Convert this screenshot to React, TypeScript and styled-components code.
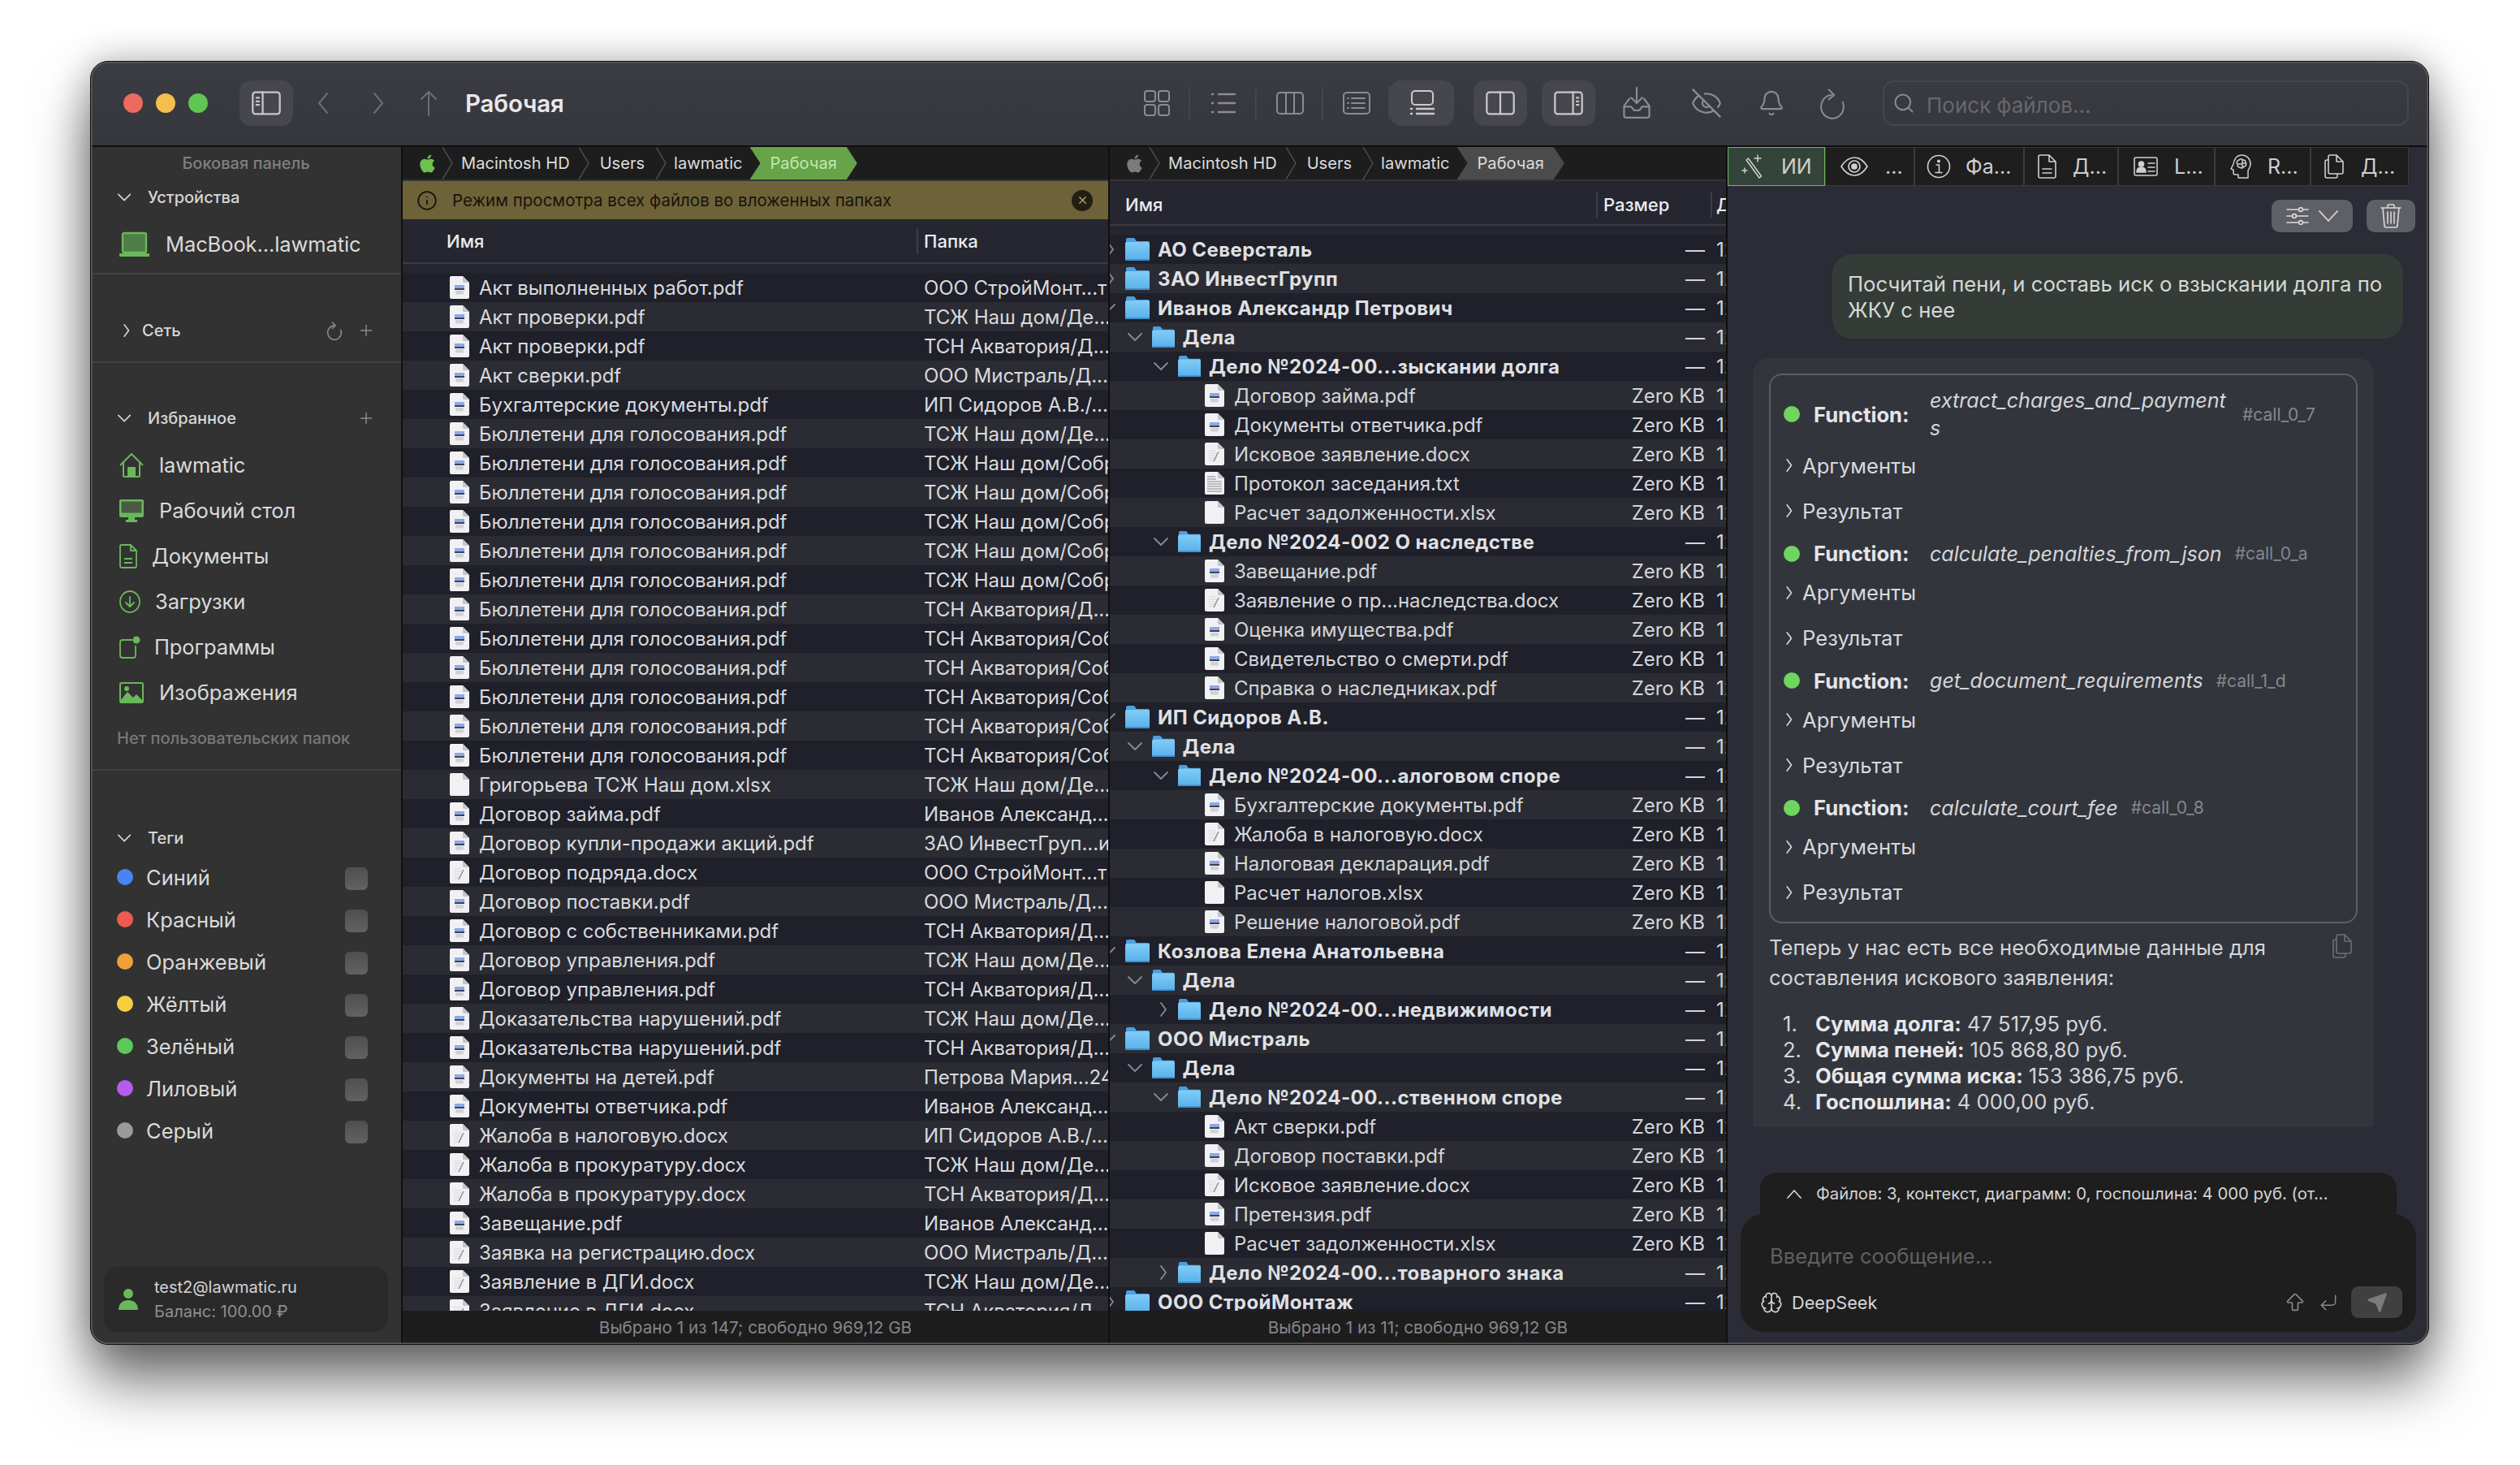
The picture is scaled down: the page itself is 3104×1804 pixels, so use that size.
import React from "react";
import styled, { createGlobalStyle } from "styled-components";
import { FaApple } from "react-icons/fa";
import { Bell, Brain, EyeOff, Info, Search, X, Plus, Send, CornerDownLeft, ArrowBigUp } from "lucide-react";

const Global = createGlobalStyle`
  html, body { margin: 0; padding: 0; background: #fff; }
  * { box-sizing: border-box; }
  body { font-family: Inter, "Noto Sans", "Liberation Sans", sans-serif; -webkit-font-smoothing: antialiased; }
`;

const Stage = styled.div`
  width: 3104px; height: 1804px; padding: 75px 0 0 111px; overflow: hidden; background: #fff;
`;
const Win = styled.div`
  position: relative; width: 2881px; height: 1581px; border: 1px solid #0c0c0c; border-radius: 22px;
  overflow: hidden; display: flex; flex-direction: column; background: #2b2c36;
  box-shadow: 0 46px 70px rgba(0,0,0,.55), 0 0 46px rgba(0,0,0,.28);
  &::after { content: ""; position: absolute; inset: 0; border-radius: 21px; pointer-events: none; box-shadow: inset 0 0 0 1.5px #5c5d61; }
`;
const TitleBar = styled.div`
  flex: 0 0 105px; display: flex; align-items: center; padding: 0 24px 1px 40px;
  background: linear-gradient(#3b3c41, #36373d); border-bottom: 2px solid #0e0e0e;
`;
const Light = styled.span<{ $c: string }>`
  width: 24px; height: 24px; border-radius: 50%; background: ${p => p.$c}; margin-right: 16px; flex: none;
`;
const IconBtn = styled.div<{ $w?: number; $on?: boolean; $gap?: number; $c?: string }>`
  flex: none; width: ${p => p.$w ?? 66}px; height: 56px; display: flex; align-items: center; justify-content: center;
  border-radius: 14px; margin-left: ${p => p.$gap ?? 0}px; color: ${p => p.$c ?? (p.$on ? "#c9c9cd" : "#8b8c91")};
  background: ${p => (p.$on ? "#46474d" : "transparent")};
`;
const Title = styled.div`
  margin-left: 15px; font-size: 29.5px; font-weight: 600; color: #e8e8ea; letter-spacing: -.2px;
`;
const Tools = styled.div`
  margin-left: auto; display: flex; align-items: center;
`;
const Seg = styled.div`
  width: 82px; height: 56px; display: flex; align-items: center; justify-content: center; color: #8b8c91; position: relative;
  &:not(:last-child)::after { content: ""; position: absolute; right: 0; top: 8px; bottom: 8px; width: 2px; background: #45464c; }
`;
const SearchBox = styled.div`
  margin-left: 29px; width: 648px; height: 56px; border: 2px solid #46474d; border-radius: 14px; display: flex; align-items: center;
  padding-left: 10px; color: #8b8c91; font-size: 26px;
  span { margin: 4px 0 0 14px; color: #66686e; }
`;

const Body = styled.div`flex: 1; min-height: 0; display: flex;`;

const Sidebar = styled.div`
  flex: 0 0 384px; background: #323232; border-right: 2px solid #0f0f0f; display: flex; flex-direction: column; color: #dcdcdc;
`;
const SideTitle = styled.div`
  height: 40px; display: flex; align-items: center; justify-content: center; font-size: 20px; color: #7f7f7f; font-weight: 500;
`;
const SectionHead = styled.div<{ $top?: number; $left?: number }>`
  height: 44px; margin-top: ${p => p.$top ?? 0}px; display: flex; align-items: center; padding: 0 32px 0 33px; font-size: 20px; font-weight: 500; color: #d6d6d6;
  b { font-weight: 500; margin-left: ${p => p.$left ?? 19}px; flex: 1; }
  svg { flex: none; }
`;
const SideAction = styled.span`
  display: flex; color: #8a8a8a; margin-left: 16px;
`;
const SideItem = styled.div<{ $top?: number; $gap?: number }>`
  height: 56px; margin-top: ${p => p.$top ?? 0}px; padding: 0 0 1px 35px; display: flex; align-items: center; gap: ${p => p.$gap ?? 19}px; font-size: 25.5px; color: #dadada; letter-spacing: -.1px;
  svg { flex: none; }
`;
const Hint = styled.div`
  height: 40px; margin-top: 8px; padding-left: 32px; display: flex; align-items: center; font-size: 20px; font-weight: 500; color: #787878;
`;
const Rule = styled.div<{ $top: number }>`
  height: 2px; margin-top: ${p => p.$top}px; background: #424242; flex: none;
`;
const TagRow = styled.div`
  height: 52px; flex: none; display: flex; align-items: center; padding: 0 41px 0 32px; font-size: 25.5px; color: #dadada;
  b { font-weight: 400; flex: 1; margin-left: 16px; }
`;
const TagDot = styled.span<{ $c: string }>`
  width: 20px; height: 20px; border-radius: 50%; background: ${p => p.$c}; flex: none;
`;
const TagBox = styled.span`
  width: 28px; height: 28px; margin-top: 4px; border-radius: 6px; background: linear-gradient(#4f4f4f, #626262); flex: none;
`;
const UserCard = styled.div`
  margin: auto 16px 15px; height: 80px; border-radius: 16px; background: #2a2a2a; display: flex; align-items: center; padding-left: 18px; gap: 20px;
`;
const UserText = styled.div`
  display: flex; flex-direction: column; gap: 9px; font-size: 20px; color: #d4d4d4; line-height: 21px;
  small { font-size: 20px; color: #8f8f8f; }
`;

const Panel = styled.div<{ $w: number }>`
  flex: 0 0 ${p => p.$w}px; min-width: 0; display: flex; flex-direction: column; border-right: 2px solid #0f0f0f; background: #252630; overflow: hidden;
`;
const Crumbs = styled.div`
  flex: 0 0 42px; display: flex; align-items: stretch; background: #1d1d1d; border-bottom: 2px solid #333437; font-size: 20.1px; color: #dcdcdc;
`;
const AppleCell = styled.div<{ $c: string }>`
  width: 48px; padding-left: 18px; display: flex; align-items: center; color: ${p => p.$c};
`;
const Crumb = styled.div<{ $pad: number }>`
  display: flex; align-items: center; padding: 0 ${p => p.$pad}px; white-space: nowrap;
`;
const CrumbActive = styled.div<{ $bg: string; $c: string }>`
  display: flex; align-items: center; padding: 0 25px; background: ${p => p.$bg}; color: ${p => p.$c}; white-space: nowrap;
  clip-path: polygon(0 0, calc(100% - 13px) 0, 100% 50%, calc(100% - 13px) 100%, 0 100%, 13px 50%);
`;
const Banner = styled.div`
  flex: 0 0 47px; background: #6e6338; display: flex; align-items: center; padding: 0 19px 0 17px; color: #17150c; font-size: 20.5px;
  span { margin-left: 18px; flex: 1; }
`;
const CloseDot = styled.div`
  width: 26px; height: 26px; border-radius: 50%; background: #211f14; color: #b7ab72; display: flex; align-items: center; justify-content: center;
`;
const ListHead = styled.div<{ $pt?: number }>`
  flex: 0 0 55px; display: flex; align-items: center; padding-top: ${p => p.$pt ?? 0}px; font-size: 22px; font-weight: 500; color: #ececec; border-bottom: 2px solid #3a3b42; white-space: nowrap;
`;
const HeadCell = styled.div<{ $left: number; $w?: number; $line?: boolean; $pad?: number }>`
  flex: none; margin-left: ${p => p.$left}px; ${p => (p.$w ? `width: ${p.$w}px;` : "")} 
  ${p => (p.$line ? `border-left: 2px solid #3d3e45; padding-left: ${p.$pad ?? 7}px; line-height: 32px;` : "")}
`;
const ListArea = styled.div`
  flex: 1; min-height: 0; padding-top: 11px; overflow: hidden;
`;
const Row = styled.div<{ $odd: boolean }>`
  height: 36px; display: flex; align-items: center; white-space: nowrap; font-size: 24px; letter-spacing: -.05px; color: #d9dade;
  background: ${p => (p.$odd ? "#1f2029" : "#2b2c33")};
  svg { flex: none; }
`;
const NameCell = styled.div`
  flex: 0 0 642px; display: flex; align-items: center; padding-left: 58px; gap: 12px;
`;
const FolderCell = styled.div`
  flex: 1; overflow: hidden; color: #d9dade;
`;
const Twist = styled.span<{ $m: number }>`
  flex: none; width: 30px; margin-left: ${p => p.$m}px; display: flex; align-items: center; color: #8a8b90;
`;
const TreeSpacer = styled.span`
  flex: none; width: 117px;
`;
const RowLabel = styled.span<{ $bold?: boolean; $gap: number }>`
  margin-left: ${p => p.$gap}px; font-weight: ${p => (p.$bold ? 700 : 400)}; color: ${p => (p.$bold ? "#dfe0e4" : "#d4d5d9")};
  letter-spacing: ${p => (p.$bold ? ".42px" : "-.05px")};
`;
const SizeCell = styled.span`
  margin-left: auto; color: #d4d5d9;
`;
const DateCell = styled.span`
  flex: 0 0 26px; padding-left: 14px; overflow: hidden; color: #d4d5d9;
`;
const Status = styled.div`
  flex: 0 0 41px; background: #1d1d1d; display: flex; align-items: center; justify-content: center; font-size: 20.7px; color: #85868a;
`;

const Right = styled.div`
  flex: 1; min-width: 0; display: flex; flex-direction: column; background: #2b2c36; color: #d6d7da;
`;
const Tabs = styled.div`
  flex: 0 0 48px; display: flex;
`;
const Tab = styled.div<{ $w: number; $on?: boolean; $pl: number; $gap: number }>`
  flex: 0 0 ${p => p.$w}px; display: flex; align-items: center; padding-left: ${p => p.$pl}px; gap: ${p => p.$gap}px; font-size: 25px; color: #cfcfcf;
  background: ${p => (p.$on ? "#34443a" : "#1e1e1e")}; border: 1px solid ${p => (p.$on ? "#6fbb5d" : "#3c3c3c")};
  svg { flex: none; }
`;
const ActionBar = styled.div`
  margin-top: 17px; padding-right: 16px; display: flex; justify-content: flex-end; gap: 17px;
`;
const GreyBtn = styled.div<{ $w: number }>`
  width: ${p => p.$w}px; height: 40px; border-radius: 10px; background: #5f6066; color: #d9d9dc; display: flex; align-items: center; justify-content: center; gap: 12px;
`;
const Bubble = styled.div`
  margin: 27px 0 0 129px; width: 703px; height: 104px; padding: 21px 18px 21px 19px; border-radius: 24px; background: #353c38; font-size: 25.7px; line-height: 32px; color: #d6d9d6;
`;
const Card = styled.div`
  margin: 24px 0 0 31px; width: 765px; height: 947px; padding: 19px 20px 0; border-radius: 20px 20px 0 0; background: #33353c;
`;
const FnBox = styled.div`
  height: 677px; border: 2px solid #5c5e65; border-radius: 16px; padding: 14px 24px 0 16px;
`;
const FnRow = styled.div<{ $top: number; $h: number }>`
  margin-top: ${p => p.$top}px; min-height: ${p => p.$h}px; display: flex; align-items: center; font-size: 25.6px;
`;
const Dot = styled.span`
  flex: none; width: 20px; height: 20px; border-radius: 50%; background: #6ed65f;
`;
const FnLabel = styled.span`
  flex: none; margin-left: 17px; width: 143px; font-weight: 700; color: #e4e5e8;
`;
const FnName = styled.span`
  max-width: 369px; font-style: italic; font-size: 25.1px; line-height: 34px; word-break: break-all; color: #d4d5d9;
`;
const FnId = styled.span`
  flex: none; margin-left: 16px; font-size: 21px; color: #85878c;
`;
const Disclosure = styled.div<{ $top: number }>`
  margin: ${p => p.$top}px 0 0 -4px; height: 36px; display: flex; align-items: center; font-size: 25.6px; color: #d8d9dc; gap: 9px;
`;
const Para = styled.div`
  margin-top: 11px; display: flex; justify-content: space-between; font-size: 25.6px; line-height: 37px; color: #d4d5d8;
`;
const CopyWrap = styled.span`
  color: #6f7076; margin: 2px 6px 0 0; display: flex; height: 34px;
`;
const NumList = styled.div`
  margin-top: 23px; padding-left: 17px; font-size: 25.6px; line-height: 32px; color: #d4d5d8;
`;
const NumItem = styled.div`
  display: flex;
  i { font-style: normal; width: 40px; }
  b { font-weight: 700; color: #e6e7ea; margin-right: 7px; }
`;
const Composer = styled.div`
  margin-top: auto; padding-bottom: 15px; display: flex; flex-direction: column;
`;
const CtxBar = styled.div`
  margin-left: 40px; width: 784px; height: 51px; border-radius: 20px 20px 0 0; background: #1e1e1e; display: flex; align-items: center; padding-left: 32px; font-size: 20.3px; color: #d4d4d4; gap: 17px;
`;
const InputBox = styled.div`
  margin-left: 16px; width: 832px; height: 145px; border-radius: 28px; background: #1e1e1e; display: flex; flex-direction: column; padding: 36px 17px 17px 24px;
`;
const Placeholder = styled.div`
  margin-left: 12px; font-size: 25.6px; line-height: 32px; color: #606060; flex: 1;
`;
const InputFoot = styled.div`
  display: flex; align-items: center; height: 39px; font-size: 21.7px; color: #d6d6d6;
  span { margin-left: 11px; flex: 1; }
`;
const SendBtn = styled.div`
  margin-left: 8px; width: 63px; height: 39px; border-radius: 9px; background: #404040; color: #7b7b7b; display: flex; align-items: center; justify-content: center;
`;
const HintIcon = styled.div`
  display: flex; justify-content: center; width: 41px; color: #8b8b8b;
`;

const Ico = ({ s = 36, w = 2, children }: { s?: number; w?: number; children: React.ReactNode }) => (
  <svg width={s} height={s} viewBox="0 0 36 36" fill="none" stroke="currentColor" strokeWidth={w} strokeLinecap="round" strokeLinejoin="round">{children}</svg>
);
const Glyph = ({ w, h, sw = 1.7, flip, children }: { w: number; h: number; sw?: number; flip?: boolean; children: React.ReactNode }) => (
  <svg width={w} height={h} viewBox={`0 0 ${w} ${h}`} fill="none" stroke="currentColor" strokeWidth={sw} strokeLinecap="round" strokeLinejoin="round" style={flip ? { transform: "scaleX(-1)" } : undefined}>{children}</svg>
);
const Chev = ({ open, s = 20, w = 1.8 }: { open?: boolean; s?: number; w?: number }) => (
  <svg width={s} height={s} viewBox="0 0 20 20" fill="none" stroke="currentColor" strokeWidth={w} strokeLinecap="round" strokeLinejoin="round">
    {open ? <polyline points="1,6 9,14 17,6" /> : <polyline points="9,2 15,10 9,18" />}
  </svg>
);
const Sep = () => (
  <svg width="14" height="40" viewBox="0 0 14 40" fill="none" stroke="#4a4a4c" strokeWidth="1.5" style={{ flex: "none" }}>
    <polyline points="1,0 13,20 1,40" />
  </svg>
);
const Refresh = ({ s, w }: { s: number; w: number }) => (
  <Ico s={s} w={w}>
    <path d="M29.5 17A12.5 13 0 1 1 17 9" />
    <path d="M14 3l6 6-6 5" />
  </Ico>
);
const FilesGlyph = () => (
  <Glyph w={26} h={30} sw={1.6}>
    <path d="M8 1h8l8 8v13a2 2 0 0 1-2 2H8a2 2 0 0 1-2-2V3a2 2 0 0 1 2-2zM16 1v8h8" />
    <path d="M6 7H4a2 2 0 0 0-2 2v18a2 2 0 0 0 2 2h11a2 2 0 0 0 2-2v-3" />
  </Glyph>
);

const FileIcon = ({ name }: { name: string }) => {
  const ext = name.split(".").pop();
  return (
    <svg width="24" height="28" viewBox="0 0 24 28">
      <path d="M2 0h14l8 8v18a2 2 0 0 1-2 2H2a2 2 0 0 1-2-2V2a2 2 0 0 1 2-2z" fill="#f1f1f3" />
      <path d="M16 0l8 8h-7a1 1 0 0 1-1-1z" fill="#c4c6cb" />
      {ext === "pdf" && (
        <g>
          <rect x="6" y="11" width="12" height="4" fill="#8ea8ea" />
          <rect x="6" y="15" width="12" height="2" fill="#3a4258" />
          <rect x="7" y="18" width="10" height="4.5" rx="1" fill="#cfd1d6" />
        </g>
      )}
      {ext === "docx" && (
        <g stroke="#d6d8de" strokeWidth="1">
          <path d="M5 10h9M5 13h10M5 16h8M5 19h10M5 22h8" />
          <path d="M17 11l-6 12" stroke="#7a7b82" strokeWidth="1.1" />
        </g>
      )}
      {ext === "txt" && (
        <g stroke="#a8aab0" strokeWidth="1.4">
          <path d="M3 6h10M3 9h11M3 12h18M3 15h18M3 18h18M3 21h18M3 24h18" />
        </g>
      )}
    </svg>
  );
};
const Folder = ({ big }: { big?: boolean }) => (
  <svg width={big ? 30 : 28} height="28" viewBox="0 0 30 28" style={{ flex: "none" }}>
    <defs>
      <linearGradient id="fg" x1="0" y1="0" x2="0" y2="1">
        <stop offset="0" stopColor="#80cdf6" />
        <stop offset="1" stopColor="#58afea" />
      </linearGradient>
    </defs>
    <path d="M1 6V2a2 2 0 0 1 2-2h8l3 4h14a2 2 0 0 1 2 2z" fill="#4a9fe0" />
    <rect x="0" y="5" width="30" height="23" rx="2" fill="url(#fg)" />
    <rect x="0" y="26" width="30" height="2" rx="1" fill="#3f8fd2" />
  </svg>
);

const files: [string, string][] = [
  ["Акт выполненных работ.pdf", "ООО СтройМонт...т"],
  ["Акт проверки.pdf", "ТСЖ Наш дом/Де..."],
  ["Акт проверки.pdf", "ТСН Акватория/Д..."],
  ["Акт сверки.pdf", "ООО Мистраль/Д...i"],
  ["Бухгалтерские документы.pdf", "ИП Сидоров А.В./..."],
  ["Бюллетени для голосования.pdf", "ТСЖ Наш дом/Де..."],
  ["Бюллетени для голосования.pdf", "ТСЖ Наш дом/Собрание"],
  ["Бюллетени для голосования.pdf", "ТСЖ Наш дом/Собрание"],
  ["Бюллетени для голосования.pdf", "ТСЖ Наш дом/Собрание"],
  ["Бюллетени для голосования.pdf", "ТСЖ Наш дом/Собрание"],
  ["Бюллетени для голосования.pdf", "ТСЖ Наш дом/Собрание"],
  ["Бюллетени для голосования.pdf", "ТСН Акватория/Д..."],
  ["Бюллетени для голосования.pdf", "ТСН Акватория/Собрание"],
  ["Бюллетени для голосования.pdf", "ТСН Акватория/Собрание"],
  ["Бюллетени для голосования.pdf", "ТСН Акватория/Собрание"],
  ["Бюллетени для голосования.pdf", "ТСН Акватория/Собрание"],
  ["Бюллетени для голосования.pdf", "ТСН Акватория/Собрание"],
  ["Григорьева ТСЖ Наш дом.xlsx", "ТСЖ Наш дом/Де..."],
  ["Договор займа.pdf", "Иванов Александ..."],
  ["Договор купли-продажи акций.pdf", "ЗАО ИнвестГруп...и"],
  ["Договор подряда.docx", "ООО СтройМонт...т"],
  ["Договор поставки.pdf", "ООО Мистраль/Д...i"],
  ["Договор с собственниками.pdf", "ТСН Акватория/Д..."],
  ["Договор управления.pdf", "ТСЖ Наш дом/Де..."],
  ["Договор управления.pdf", "ТСН Акватория/Д..."],
  ["Доказательства нарушений.pdf", "ТСЖ Наш дом/Де..."],
  ["Доказательства нарушений.pdf", "ТСН Акватория/Д..."],
  ["Документы на детей.pdf", "Петрова Мария...24"],
  ["Документы ответчика.pdf", "Иванов Александ..."],
  ["Жалоба в налоговую.docx", "ИП Сидоров А.В./..."],
  ["Жалоба в прокуратуру.docx", "ТСЖ Наш дом/Де..."],
  ["Жалоба в прокуратуру.docx", "ТСН Акватория/Д..."],
  ["Завещание.pdf", "Иванов Александ..."],
  ["Заявка на регистрацию.docx", "ООО Мистраль/Д...:"],
  ["Заявление в ДГИ.docx", "ТСЖ Наш дом/Де..."],
  ["Заявление в ДГИ.docx", "ТСН Акватория/Д..."],
];

type T = [number, string, (0 | 1 | 2)?];
const tree: T[] = [
  [0, "АО Северсталь", 1],
  [0, "ЗАО ИнвестГрупп", 1],
  [0, "Иванов Александр Петрович", 2],
  [1, "Дела", 2],
  [2, "Дело №2024-00...зыскании долга", 2],
  [3, "Договор займа.pdf"],
  [3, "Документы ответчика.pdf"],
  [3, "Исковое заявление.docx"],
  [3, "Протокол заседания.txt"],
  [3, "Расчет задолженности.xlsx"],
  [2, "Дело №2024-002 О наследстве", 2],
  [3, "Завещание.pdf"],
  [3, "Заявление о пр...наследства.docx"],
  [3, "Оценка имущества.pdf"],
  [3, "Свидетельство о смерти.pdf"],
  [3, "Справка о наследниках.pdf"],
  [0, "ИП Сидоров А.В.", 2],
  [1, "Дела", 2],
  [2, "Дело №2024-00...алоговом споре", 2],
  [3, "Бухгалтерские документы.pdf"],
  [3, "Жалоба в налоговую.docx"],
  [3, "Налоговая декларация.pdf"],
  [3, "Расчет налогов.xlsx"],
  [3, "Решение налоговой.pdf"],
  [0, "Козлова Елена Анатольевна", 2],
  [1, "Дела", 2],
  [2, "Дело №2024-00...недвижимости", 1],
  [0, "ООО Мистраль", 2],
  [1, "Дела", 2],
  [2, "Дело №2024-00...ственном споре", 2],
  [3, "Акт сверки.pdf"],
  [3, "Договор поставки.pdf"],
  [3, "Исковое заявление.docx"],
  [3, "Претензия.pdf"],
  [3, "Расчет задолженности.xlsx"],
  [2, "Дело №2024-00...товарного знака", 1],
  [0, "ООО СтройМонтаж", 1],
];

const tags: [string, string][] = [
  ["Синий", "#4a84f0"], ["Красный", "#ee5b50"], ["Оранжевый", "#f0a03a"], ["Жёлтый", "#f5cf3f"],
  ["Зелёный", "#5cc85c"], ["Лиловый", "#b65cec"], ["Серый", "#9a9a9c"],
];
const green = "#6ab85a";

const fns: [string, string][] = [
  ["extract_charges_and_payments", "#call_0_7"],
  ["calculate_penalties_from_json", "#call_0_a"],
  ["get_document_requirements", "#call_1_d"],
  ["calculate_court_fee", "#call_0_8"],
];

const PanelCrumbs = ({ apple, bg, c }: { apple: string; bg: string; c: string }) => (
  <Crumbs>
    <AppleCell $c={apple}><FaApple size={25} /></AppleCell>
    <Sep /><Crumb $pad={10}>Macintosh HD</Crumb>
    <Sep /><Crumb $pad={13}>Users</Crumb>
    <Sep /><Crumb $pad={9}>lawmatic</Crumb>
    <CrumbActive $bg={bg} $c={c}>Рабочая</CrumbActive>
  </Crumbs>
);

export default function App() {
  return (
    <Stage>
      <Global />
      <Win>
        <TitleBar>
          <Light $c="#ec6a5e" /><Light $c="#f4bf4f" /><Light $c="#61c554" />
          <IconBtn $on $gap={23}>
            <Ico s={40}>
              <rect x="3" y="6" width="30" height="24" rx="3" />
              <path d="M14 6v24M7 12h3M7 16h3M7 20h3" />
            </Ico>
          </IconBtn>
          <IconBtn $gap={5} $c="#6d6e74"><Ico><polyline points="22,6 12,18 22,30" /></Ico></IconBtn>
          <IconBtn $c="#6d6e74"><Ico><polyline points="14,6 24,18 14,30" /></Ico></IconBtn>
          <IconBtn $w={60} $c="#6d6e74"><Ico><path d="M18 33V4M9 13l9-9 9 9" /></Ico></IconBtn>
          <Title>Рабочая</Title>
          <Tools>
            <Seg><Ico><rect x="3" y="3" width="13" height="13" rx="3" /><rect x="20" y="3" width="13" height="13" rx="3" /><rect x="3" y="20" width="13" height="13" rx="3" /><rect x="20" y="20" width="13" height="13" rx="3" /></Ico></Seg>
            <Seg><Ico><path d="M12 7h20M12 18h20M12 29h20M4 7h1M4 18h1M4 29h1" strokeWidth="2.6" /></Ico></Seg>
            <Seg><Ico><rect x="2" y="5" width="32" height="26" rx="4" /><path d="M13 5v26M23 5v26" /></Ico></Seg>
            <Seg><Ico><rect x="2" y="5" width="32" height="26" rx="4" /><path d="M12 12h16M12 18h16M12 24h16M7 12h1M7 18h1M7 24h1" /></Ico></Seg>
            <IconBtn $w={79} $on><Ico><rect x="5" y="3" width="26" height="17" rx="4" /><path d="M11 25h21M11 31h21M4 25h1M4 31h1" strokeWidth="2.4" /></Ico></IconBtn>
            <IconBtn $on $gap={24}><Ico s={40}><rect x="3" y="6" width="30" height="24" rx="3" /><path d="M18 6v24" /></Ico></IconBtn>
            <IconBtn $on $gap={18}><Ico s={40}><rect x="3" y="6" width="30" height="24" rx="3" /><path d="M23 6v24M27 12h2M27 16h2M27 20h2" /></Ico></IconBtn>
            <IconBtn $gap={18}><Ico s={40}><path d="M18 1v17M12 12l6 6 6-6M10 13l-6 8v11a2 2 0 0 0 2 2h24a2 2 0 0 0 2-2V21l-6-8M4 22h8l3 4h6l3-4h8" /></Ico></IconBtn>
            <IconBtn $gap={20}><EyeOff size={40} strokeWidth={1.4} /></IconBtn>
            <IconBtn $gap={14}><Bell size={34} strokeWidth={1.5} /></IconBtn>
            <IconBtn $gap={9}><Refresh s={40} w={1.8} /></IconBtn>
            <SearchBox><Search size={28} strokeWidth={1.7} /><span>Поиск файлов...</span></SearchBox>
          </Tools>
        </TitleBar>
        <Body>
          <Sidebar>
            <SideTitle>Боковая панель</SideTitle>
            <SectionHead><Chev open s={18} /><b>Устройства</b></SectionHead>
            <SideItem $top={8} $gap={20}>
              <svg width="37" height="32" viewBox="0 0 37 32" fill={green}><rect x="4" y="2" width="29" height="24" rx="2" fill="#4f7d48" stroke={green} strokeWidth="2.4" /><rect x="0" y="27" width="37" height="4" rx="1" /></svg>
              MacBook...lawmatic
            </SideItem>
            <Rule $top={7} />
            <SectionHead $top={47} $left={12}><Chev s={18} /><b>Сеть</b>
              <SideAction><Refresh s={24} w={2.4} /></SideAction>
              <SideAction><Plus size={22} strokeWidth={1.6} /></SideAction>
            </SectionHead>
            <Rule $top={16} />
            <SectionHead $top={46}><Chev open s={18} /><b>Избранное</b><SideAction><Plus size={22} strokeWidth={1.6} /></SideAction></SectionHead>
            <SideItem $top={8}>
              <svg width="30" height="30" viewBox="0 0 30 30" fill="none" stroke={green} strokeWidth="2" strokeLinejoin="round"><path d="M1 15L15 1l14 14M5 11v17a1 1 0 0 0 1 1h18a1 1 0 0 0 1-1V11" /><rect x="11" y="18" width="8" height="11" fill={green} /></svg>
              lawmatic
            </SideItem>
            <SideItem>
              <svg width="30" height="30" viewBox="0 0 30 30"><rect x="0" y="1" width="30" height="22" rx="2" fill={green} /><rect x="2.5" y="3.5" width="25" height="14" fill="#4b5a47" /><rect x="11" y="23" width="8" height="4" fill={green} /><rect x="8" y="26" width="14" height="3" fill={green} /></svg>
              Рабочий стол
            </SideItem>
            <SideItem $gap={18}>
              <svg width="22" height="30" viewBox="0 0 22 30" fill="none" stroke={green} strokeWidth="1.8" strokeLinejoin="round"><path d="M2 1h12l7 7v19a2 2 0 0 1-2 2H3a2 2 0 0 1-2-2V2zM14 1v7h7M6 18h10M6 23h10" /></svg>
              Документы
            </SideItem>
            <SideItem $gap={18}>
              <svg width="26" height="28" viewBox="0 0 26 28" fill="none" stroke={green} strokeWidth="1.8" strokeLinecap="round" strokeLinejoin="round"><ellipse cx="13" cy="14" rx="12" ry="13" /><path d="M13 8v12M8 15l5 5 5-5" /></svg>
              Загрузки
            </SideItem>
            <SideItem $gap={17}>
              <svg width="26" height="28" viewBox="0 0 26 28" fill="none" stroke={green} strokeWidth="1.8" strokeLinejoin="round"><path d="M16 5H4a3 3 0 0 0-3 3v16a3 3 0 0 0 3 3h13a3 3 0 0 0 3-3V12" /><circle cx="21" cy="5" r="4.5" fill={green} stroke="none" /></svg>
              Программы
            </SideItem>
            <SideItem>
              <svg width="30" height="28" viewBox="0 0 30 28"><rect x="1" y="2" width="28" height="24" rx="2" fill="none" stroke={green} strokeWidth="2" /><path d="M1 24l9-11 7 7 4-4 8 8v3H1z" fill={green} /><circle cx="9" cy="9" r="3" fill={green} /></svg>
              Изображения
            </SideItem>
            <Hint>Нет пользовательских папок</Hint>
            <Rule $top={18} />
            <SectionHead $top={61}><Chev open s={18} /><b>Теги</b></SectionHead>
            {tags.map(([n, c]) => (
              <TagRow key={n}><TagDot $c={c} /><b>{n}</b><TagBox /></TagRow>
            ))}
            <UserCard>
              <svg width="24" height="26" viewBox="0 0 24 26" fill={green} style={{ flex: "none" }}><ellipse cx="12" cy="6" rx="6" ry="6" /><path d="M0 26c0-8 5-12 12-12s12 4 12 12z" /></svg>
              <UserText>test2@lawmatic.ru<small>Баланс: 100.00 ₽</small></UserText>
            </UserCard>
          </Sidebar>
          <Panel $w={871}>
            <PanelCrumbs apple="#6fc04f" bg="#67a348" c="#c4e6b0" />
            <Banner><Info size={26} strokeWidth={1.7} /><span>Режим просмотра всех файлов во вложенных папках</span><CloseDot><X size={15} strokeWidth={2} /></CloseDot></Banner>
            <ListHead><HeadCell $left={54} $w={579}>Имя</HeadCell><HeadCell $left={0} $line>Папка</HeadCell></ListHead>
            <ListArea>
              {files.map(([n, f], i) => (
                <Row key={i} $odd={i % 2 === 0}>
                  <NameCell><FileIcon name={n} />{n}</NameCell>
                  <FolderCell>{f}</FolderCell>
                </Row>
              ))}
            </ListArea>
            <Status>Выбрано 1 из 147; свободно 969,12 GB</Status>
          </Panel>
          <Panel $w={761}>
            <PanelCrumbs apple="#7c7c7c" bg="#4b4b4c" c="#dcdcdc" />
            <ListHead $pt={4}><HeadCell $left={19} $w={580}>Имя</HeadCell><HeadCell $left={0} $w={141} $line>Размер</HeadCell><HeadCell $left={0} $line $pad={5}>Д</HeadCell></ListHead>
            <ListArea>
              {tree.map(([lvl, name, kind], i) => {
                const isFolder = !!kind;
                return (
                  <Row key={i} $odd={i % 2 === 0}>
                    {isFolder ? <Twist $m={-11 + lvl * 32.5}><Chev open={kind === 2} /></Twist> : <TreeSpacer />}
                    {isFolder ? <Folder big={lvl === 0} /> : <FileIcon name={name} />}
                    <RowLabel $bold={isFolder} $gap={isFolder ? 10 : 12}>{name}</RowLabel>
                    <SizeCell>{isFolder ? "—" : "Zero KB"}</SizeCell>
                    <DateCell>12.01</DateCell>
                  </Row>
                );
              })}
            </ListArea>
            <Status>Выбрано 1 из 11; свободно 969,12 GB</Status>
          </Panel>
          <Right>
            <Tabs>
              <Tab $w={120} $on $pl={13} $gap={18}>
                <Glyph w={34} h={34} sw={1.5}>
                  <path d="M9 9l16 22 2.5-2L11.5 7z" />
                  <path d="M23 3v8M19 7h8M7 19v6M4 22h6" />
                </Glyph>
                ИИ
              </Tab>
              <Tab $w={110} $pl={18} $gap={21}>
                <Glyph w={34} h={34} sw={1.7}>
                  <path d="M1 17C6 9 11 6 17 6s11 3 16 11c-5 8-10 11-16 11S6 25 1 17z" />
                  <circle cx="17" cy="17" r="7" />
                  <circle cx="17" cy="17" r="3" fill="currentColor" />
                </Glyph>
                ...
              </Tab>
              <Tab $w={135} $pl={14} $gap={18}>
                <Glyph w={30} h={30} sw={1.6}>
                  <circle cx="15" cy="15" r="13.5" />
                  <path d="M12 13h3.5v9M11 22.5h8" />
                  <circle cx="15" cy="8.5" r="1.2" fill="currentColor" />
                </Glyph>
                Фа...
              </Tab>
              <Tab $w={116} $pl={13} $gap={16}>
                <Glyph w={30} h={30} sw={1.6}>
                  <path d="M6 1h11l8 8v18a2 2 0 0 1-2 2H6a2 2 0 0 1-2-2V3a2 2 0 0 1 2-2zM17 1v8h8M9 18h11M9 23h11" />
                </Glyph>
                Д...
              </Tab>
              <Tab $w={119} $pl={18} $gap={20}>
                <Glyph w={30} h={30} sw={1.6}>
                  <rect x="1" y="4" width="28" height="22" rx="2" />
                  <circle cx="9.5" cy="12" r="3" fill="currentColor" />
                  <path d="M4 22c0-4 2-6 5.5-6s5.5 2 5.5 6z" fill="currentColor" />
                  <path d="M18 11h8M18 16h8M18 21h8" />
                </Glyph>
                L...
              </Tab>
              <Tab $w={118} $pl={16} $gap={18}>
                <Glyph w={30} h={30} sw={1.5} flip>
                  <path d="M14 1C7 1 3 6 3 12c0 4 2 6 3 8v9h12v-4h4a2 2 0 0 0 2-2v-4l3-1-3-6C23 6 20 1 14 1z" />
                  <path d="M9 10a3 3 0 0 1 3-3 3 3 0 0 1 5 0 3 3 0 0 1 2 5 3 3 0 0 1-3 4 3 3 0 0 1-5-1 3 3 0 0 1-2-5zM13 7v9M9 11h4M13 12h6" />
                </Glyph>
                R...
              </Tab>
              <Tab $w={121} $pl={15} $gap={20}><FilesGlyph />Д...</Tab>
            </Tabs>
            <ActionBar>
              <GreyBtn $w={100}>
                <Glyph w={28} h={22} sw={1.6}>
                  <path d="M1 3h26M1 11h26M1 19h26" />
                  <circle cx="18" cy="3" r="2.4" fill="#5f6066" />
                  <circle cx="10" cy="11" r="2.4" fill="#5f6066" />
                  <circle cx="18" cy="19" r="2.4" fill="#5f6066" />
                </Glyph>
                <Glyph w={24} h={14} sw={1.8}><polyline points="1,1 12,13 23,1" /></Glyph>
              </GreyBtn>
              <GreyBtn $w={60}>
                <Glyph w={26} h={30} sw={1.6}>
                  <path d="M1 5h24M9 5V2a1 1 0 0 1 1-1h6a1 1 0 0 1 1 1v3M3 5l2 22a2 2 0 0 0 2 2h12a2 2 0 0 0 2-2l2-22M9 10v14M13 10v14M17 10v14" />
                </Glyph>
              </GreyBtn>
            </ActionBar>
            <Bubble>Посчитай пени, и составь иск о взыскании долга по ЖКУ с нее</Bubble>
            <Card>
              <FnBox>
                {fns.map(([n, id], i) => (
                  <React.Fragment key={id}>
                    <FnRow $top={i === 0 ? 0 : 17.5} $h={i === 0 ? 65 : 34}>
                      <Dot /><FnLabel>Function:</FnLabel><FnName>{n}</FnName><FnId>{id}</FnId>
                    </FnRow>
                    <Disclosure $top={i === 0 ? 11 : 13}><Chev s={18} />Аргументы</Disclosure>
                    <Disclosure $top={20}><Chev s={18} />Результат</Disclosure>
                  </React.Fragment>
                ))}
              </FnBox>
              <Para>
                <span>Теперь у нас есть все необходимые данные для<br />составления искового заявления:</span>
                <CopyWrap><FilesGlyph /></CopyWrap>
              </Para>
              <NumList>
                <NumItem><i>1.</i><b>Сумма долга:</b>47 517,95 руб.</NumItem>
                <NumItem><i>2.</i><b>Сумма пеней:</b>105 868,80 руб.</NumItem>
                <NumItem><i>3.</i><b>Общая сумма иска:</b>153 386,75 руб.</NumItem>
                <NumItem><i>4.</i><b>Госпошлина:</b>4 000,00 руб.</NumItem>
              </NumList>
            </Card>
            <Composer>
              <CtxBar><svg width="20" height="14" viewBox="0 0 20 14" fill="none" stroke="#cfcfcf" strokeWidth="1.8" strokeLinecap="round" strokeLinejoin="round"><polyline points="2,12 10,3 18,12" /></svg>Файлов: 3, контекст, диаграмм: 0, госпошлина: 4 000 руб. (от...</CtxBar>
              <InputBox>
                <Placeholder>Введите сообщение...</Placeholder>
                <InputFoot>
                  <Brain size={28} strokeWidth={1.4} /><span>DeepSeek</span>
                  <HintIcon><ArrowBigUp size={28} strokeWidth={1.4} /></HintIcon>
                  <HintIcon><CornerDownLeft size={26} strokeWidth={1.4} /></HintIcon>
                  <SendBtn><Send size={26} strokeWidth={1.5} fill="#7b7b7b" /></SendBtn>
                </InputFoot>
              </InputBox>
            </Composer>
          </Right>
        </Body>
      </Win>
    </Stage>
  );
}
